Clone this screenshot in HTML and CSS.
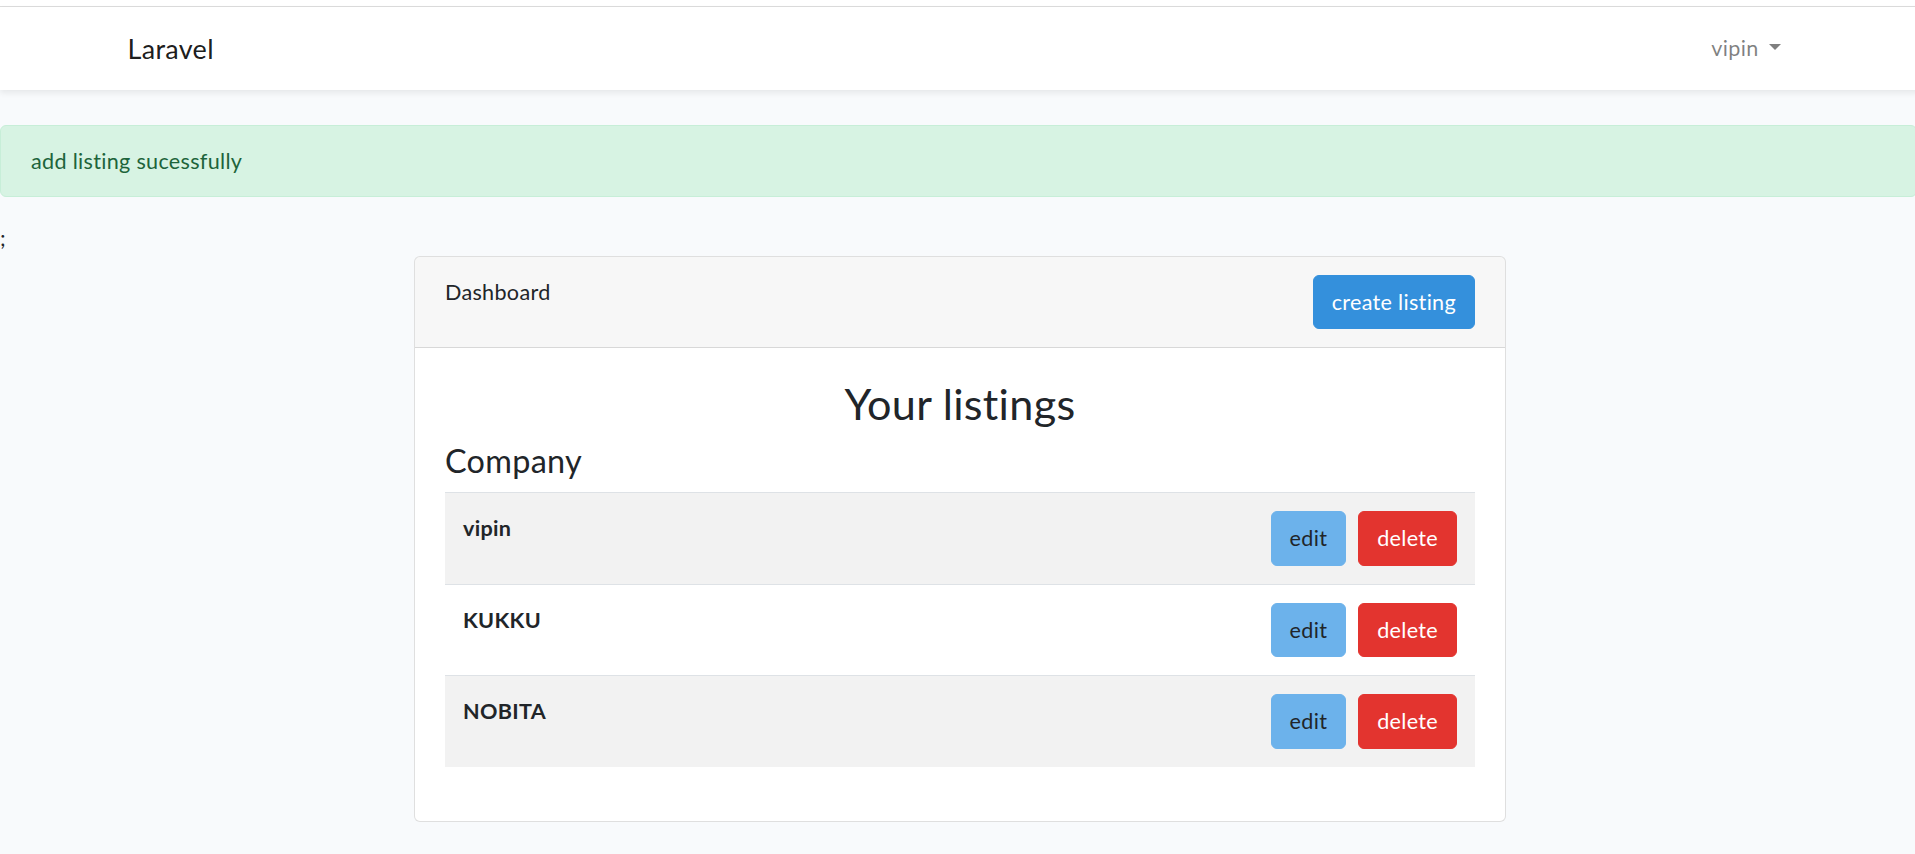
FILE: index.html
```html
<!DOCTYPE html>
<html lang="en">
<head>
<meta charset="utf-8">
<title>Laravel</title>
<link rel="stylesheet" href="styles.css">
</head>
<body>
<div class="page">
  <div class="topstrip"></div>
  <nav class="navbar">
    <div class="nav-container">
      <a class="brand" href="#">Laravel</a>
      <a class="nav-link" href="#">vipin<span class="caret"></span></a>
    </div>
  </nav>
  <main class="main">
    <div class="alert">add listing sucessfully</div>
    <div class="semi">;</div>
    <div class="container">
      <div class="col">
        <div class="card">
          <div class="card-header">
            <span class="header-title">Dashboard</span>
            <a class="btn btn-primary" href="#">create listing</a>
          </div>
          <div class="card-body">
            <h2 class="title">Your listings</h2>
            <h4 class="subtitle">Company</h4>
            <table class="table">
              <tbody>
                <tr class="odd">
                  <th>vipin</th>
                  <td class="actions"><div class="btns"><a class="btn btn-info" href="#">edit</a><a class="btn btn-danger" href="#">delete</a></div></td>
                </tr>
                <tr>
                  <th>KUKKU</th>
                  <td class="actions"><div class="btns"><a class="btn btn-info" href="#">edit</a><a class="btn btn-danger" href="#">delete</a></div></td>
                </tr>
                <tr class="odd">
                  <th>NOBITA</th>
                  <td class="actions"><div class="btns"><a class="btn btn-info" href="#">edit</a><a class="btn btn-danger" href="#">delete</a></div></td>
                </tr>
              </tbody>
            </table>
          </div>
        </div>
      </div>
    </div>
  </main>
</div>
</body>
</html>
```
FILE: styles.css
```css
html, body {
  margin: 0;
  padding: 0;
  overflow: hidden;
  background: #f8fafc;
}
body {
  font-family: Lato, "Noto Sans", sans-serif;
  font-size: 21.6px;
  line-height: 1.6;
  color: #212529;
  letter-spacing: 0.3px;
}
a { text-decoration: none; }
.page {
  width: 1920px;
  min-height: 854px;
}
.topstrip {
  height: 6px;
  background: #ffffff;
  border-bottom: 1px solid #dcdcdc;
}
.navbar {
  background: #ffffff;
  padding: 12px 0;
  box-shadow: 0 3px 6px rgba(0, 0, 0, 0.075);
  position: relative;
}
.nav-container {
  width: 1665px;
  margin: 0 auto;
  display: flex;
  align-items: center;
  justify-content: space-between;
}
.brand {
  font-size: 27px;
  line-height: 43.2px;
  padding: 7.5px 0;
  color: rgba(0, 0, 0, 0.9);
}
.nav-link {
  color: rgba(0, 0, 0, 0.5);
  padding: 12px 12px;
  display: flex;
  align-items: center;
}
.caret {
  display: inline-block;
  width: 0;
  height: 0;
  margin-left: 10px;
  margin-top: -2px;
  border-top: 6.5px solid rgba(0, 0, 0, 0.5);
  border-left: 6.5px solid transparent;
  border-right: 6.5px solid transparent;
}
.main {
  padding: 35px 0;
}
.alert {
  width: 1917px;
  padding: 18px 30px;
  border: 1.5px solid #c7eed8;
  border-radius: 6px;
  background: #d7f3e3;
  color: #1d643b;
  margin-bottom: 24px;
  box-sizing: border-box;
  line-height: 34.56px;
}
.semi {
  line-height: 34.56px;
}
.container {
  width: 1920px;
  display: flex;
  justify-content: center;
}
.col {
  width: 1092px;
}
.card {
  background: #ffffff;
  border: 1.5px solid rgba(0, 0, 0, 0.125);
  border-radius: 6px;
  overflow: hidden;
}
.card-header {
  background: rgba(0, 0, 0, 0.03);
  border-bottom: 1.5px solid rgba(0, 0, 0, 0.125);
  padding: 18px 30px;
  display: flex;
  justify-content: space-between;
  align-items: flex-start;
}
.header-title {
  line-height: 34.56px;
}
.btn {
  display: inline-block;
  padding: 9px 18px;
  border: 1.5px solid transparent;
  border-radius: 6px;
  line-height: 34.56px;
  font-size: 21.6px;
}
.btn-primary {
  background: #3490dc;
  border-color: #3490dc;
  color: #ffffff;
}
.btn-info {
  background: #6cb2eb;
  border-color: #6cb2eb;
  color: #212529;
}
.btn-danger {
  background: #e3342f;
  border-color: #e3342f;
  color: #ffffff;
}
.card-body {
  padding: 30px;
}
.title {
  margin: 0 0 12px;
  font-size: 43.2px;
  line-height: 1.2;
  font-weight: 400;
  text-align: center;
}
.subtitle {
  margin: 0 0 11px;
  font-size: 32.4px;
  line-height: 1.2;
  font-weight: 400;
}
.table {
  width: 100%;
  border-collapse: collapse;
  margin-bottom: 24px;
}
.table th, .table td {
  padding: 18px;
  border-top: 1.5px solid #dee2e6;
  vertical-align: top;
  text-align: left;
  line-height: 34.56px;
}
.table th {
  font-weight: 700;
}
.table tr.odd {
  background: rgba(0, 0, 0, 0.05);
}
.table td.actions {
  text-align: right;
}
.btns {
  display: flex;
  justify-content: flex-end;
  gap: 12px;
}
```
